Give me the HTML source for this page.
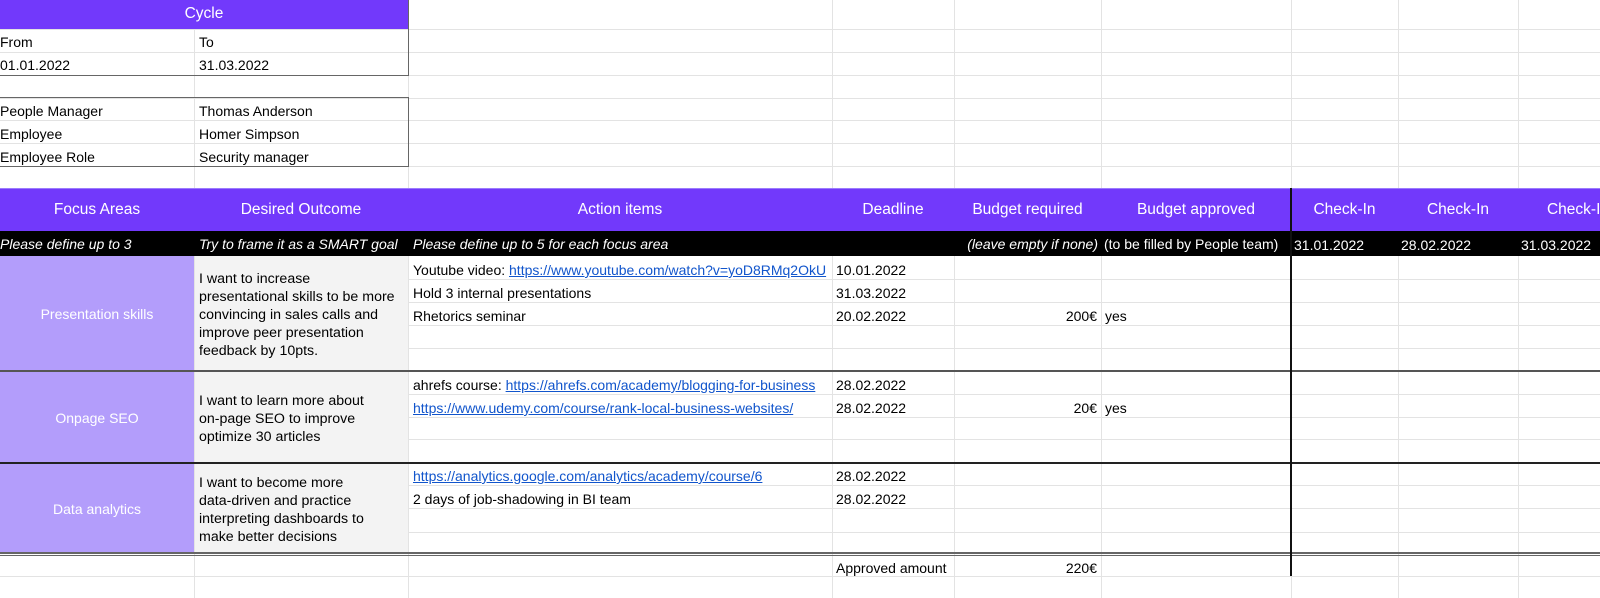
<!DOCTYPE html>
<html><head><meta charset="utf-8"><style>
body{margin:0;width:1600px;height:598px;overflow:hidden;background:#fff;font-family:"Liberation Sans",Arial,sans-serif;font-size:14px;color:#000;position:relative}
div{position:absolute;box-sizing:border-box}
.h{left:0;width:1600px;height:1px;background:#e3e3e3}
.v{top:0;width:1px;height:598px;background:#e3e3e3}
.t{white-space:nowrap;line-height:16px}
.w{color:#fff}
a{color:#1155cc;text-decoration:underline}
.i{font-style:italic;color:#fff;font-size:14px}
.o{white-space:nowrap;line-height:18px;font-size:14.2px}
</style></head><body>
<div class="v" style="left:194px"></div><div class="v" style="left:408px"></div><div class="v" style="left:832px"></div><div class="v" style="left:954px"></div><div class="v" style="left:1101px"></div><div class="v" style="left:1291px"></div><div class="v" style="left:1398px"></div><div class="v" style="left:1518px"></div>
<div class="h" style="top:29px"></div><div class="h" style="top:52px"></div><div class="h" style="top:75px"></div><div class="h" style="top:98px"></div><div class="h" style="top:120px"></div><div class="h" style="top:143px"></div><div class="h" style="top:166px"></div><div class="h" style="top:188px"></div>
<div class="h" style="top:279px"></div><div class="h" style="top:302px"></div><div class="h" style="top:325px"></div><div class="h" style="top:348px"></div>
<div class="h" style="top:394px"></div><div class="h" style="top:417px"></div><div class="h" style="top:439px"></div>
<div class="h" style="top:485px"></div><div class="h" style="top:508px"></div><div class="h" style="top:532px"></div>
<div class="h" style="top:576px"></div>

<div style="left:0;top:0;width:408px;height:29px;background:#7239fb"></div>
<div style="left:0;top:0;width:409px;height:76px;border-right:1px solid #666;border-bottom:1px solid #666"></div>
<div class="t w" style="left:0;top:6px;width:408px;text-align:center;font-size:15.5px">Cycle</div>
<div class="t" style="left:0;top:34px">From</div><div class="t" style="left:199px;top:34px">To</div>
<div class="t" style="left:0;top:57px">01.01.2022</div><div class="t" style="left:199px;top:57px">31.03.2022</div>
<div style="left:-1px;top:97px;width:410px;height:70px;border:1px solid #666"></div>
<div class="t" style="left:0;top:103px">People Manager</div><div class="t" style="left:199px;top:103px">Thomas Anderson</div>
<div class="t" style="left:0;top:126px">Employee</div><div class="t" style="left:199px;top:126px">Homer Simpson</div>
<div class="t" style="left:0;top:149px">Employee Role</div><div class="t" style="left:199px;top:149px">Security manager</div>

<div style="left:0;top:188px;width:1600px;height:43px;background:#7239fb;border-top:1px solid #9b7bfd"></div>
<div style="left:0;top:231px;width:1600px;height:25px;background:#000"></div>
<div class="t w" style="left:0;top:202px;width:194px;text-align:center;font-size:15.5px">Focus Areas</div>
<div class="t w" style="left:194px;top:202px;width:214px;text-align:center;font-size:15.5px">Desired Outcome</div>
<div class="t w" style="left:408px;top:202px;width:424px;text-align:center;font-size:15.5px">Action items</div>
<div class="t w" style="left:832px;top:202px;width:122px;text-align:center;font-size:15.5px">Deadline</div>
<div class="t w" style="left:954px;top:202px;width:147px;text-align:center;font-size:15.5px">Budget required</div>
<div class="t w" style="left:1101px;top:202px;width:190px;text-align:center;font-size:15.5px">Budget approved</div>
<div class="t w" style="left:1291px;top:202px;width:107px;text-align:center;font-size:15.5px">Check-In</div>
<div class="t w" style="left:1398px;top:202px;width:120px;text-align:center;font-size:15.5px">Check-In</div>
<div class="t w" style="left:1518px;top:202px;width:120px;text-align:center;font-size:15.5px">Check-In</div>
<div class="t i" style="left:0;top:236px">Please define up to 3</div>
<div class="t i" style="left:199px;top:236px">Try to frame it as a SMART goal</div>
<div class="t i" style="left:413px;top:236px">Please define up to 5 for each focus area</div>
<div class="t i" style="left:954px;top:236px;width:144px;text-align:right">(leave empty if none)</div>
<div class="t w" style="left:1104px;top:236px">(to be filled by People team)</div>
<div class="t w" style="left:1294px;top:237px;font-size:14px">31.01.2022</div>
<div class="t w" style="left:1401px;top:237px;font-size:14px">28.02.2022</div>
<div class="t w" style="left:1521px;top:237px;font-size:14px">31.03.2022</div>

<div style="left:0;top:256px;width:194px;height:298px;background:#b39dfb"></div>
<div style="left:195px;top:256px;width:213px;height:298px;background:#f3f3f3"></div>
<div style="left:0;top:370px;width:1600px;height:2px;background:#555"></div>
<div style="left:0;top:462px;width:1600px;height:2px;background:#222"></div>
<div style="left:0;top:552px;width:1600px;height:4px;border-top:2px solid #666;border-bottom:1px solid #666"></div>
<div style="left:1290px;top:188px;width:2px;height:388px;background:#111"></div>

<div class="t w" style="left:0;top:306px;width:194px;text-align:center">Presentation skills</div>
<div class="t w" style="left:0;top:410px;width:194px;text-align:center">Onpage SEO</div>
<div class="t w" style="left:0;top:501px;width:194px;text-align:center">Data analytics</div>

<div class="o" style="left:199px;top:270px">I want to increase<br>presentational skills to be more<br>convincing in sales calls and<br>improve peer presentation<br>feedback by 10pts.</div>
<div class="o" style="left:199px;top:392px">I want to learn more about<br>on-page SEO to improve<br>optimize 30 articles</div>
<div class="o" style="left:199px;top:474px">I want to become more<br>data-driven and practice<br>interpreting dashboards to<br>make better decisions</div>

<div class="t" style="left:413px;top:262px;width:418px;overflow:hidden">Youtube video: <a>https://www.youtube.com/watch?v=yoD8RMq2OkU</a></div>
<div class="t" style="left:413px;top:285px">Hold 3 internal presentations</div>
<div class="t" style="left:413px;top:308px">Rhetorics seminar</div>
<div class="t" style="left:413px;top:377px">ahrefs course: <a>https://ahrefs.com/academy/blogging-for-business</a></div>
<div class="t" style="left:413px;top:400px"><a>https://www.udemy.com/course/rank-local-business-websites/</a></div>
<div class="t" style="left:413px;top:468px"><a>https://analytics.google.com/analytics/academy/course/6</a></div>
<div class="t" style="left:413px;top:491px">2 days of job-shadowing in BI team</div>

<div class="t" style="left:836px;top:262px">10.01.2022</div>
<div class="t" style="left:836px;top:285px">31.03.2022</div>
<div class="t" style="left:836px;top:308px">20.02.2022</div>
<div class="t" style="left:836px;top:377px">28.02.2022</div>
<div class="t" style="left:836px;top:400px">28.02.2022</div>
<div class="t" style="left:836px;top:468px">28.02.2022</div>
<div class="t" style="left:836px;top:491px">28.02.2022</div>

<div class="t" style="left:954px;top:308px;width:143px;text-align:right">200€</div><div class="t" style="left:1105px;top:308px">yes</div>
<div class="t" style="left:954px;top:400px;width:143px;text-align:right">20€</div><div class="t" style="left:1105px;top:400px">yes</div>
<div class="t" style="left:836px;top:560px">Approved amount</div>
<div class="t" style="left:954px;top:560px;width:143px;text-align:right">220€</div>
</body></html>
